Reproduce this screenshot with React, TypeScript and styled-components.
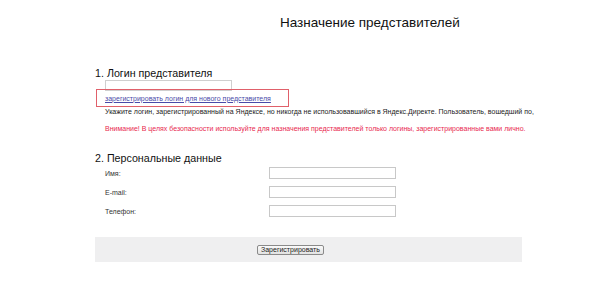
import React from "react";
import styled, { createGlobalStyle } from "styled-components";

const Global = createGlobalStyle`
  html, body { margin: 0; padding: 0; background: #fff; }
  body { font-family: "Liberation Sans", Arial, sans-serif; color: #000; }
`;

const Page = styled.div`
  width: 596px;
  height: 290px;
  overflow: hidden;
  padding-top: 14px;
  box-sizing: border-box;
`;

const Title = styled.h1`
  margin: 0 0 0 280px;
  font-size: 13.5px;
  line-height: 17px;
  font-weight: normal;
  color: #111;
`;

const SectionHeading = styled.h2<{ $top: number }>`
  margin: ${(p) => p.$top}px 0 0 95px;
  font-size: 10.7px;
  line-height: 13px;
  font-weight: normal;
  color: #111;
`;

const Block = styled.div`
  margin-left: 105px;
`;

const LoginInput = styled.input`
  display: block;
  box-sizing: border-box;
  width: 127px;
  height: 11px;
  margin: 0;
  padding: 0;
  border: 1px solid #cfcfcf;
  background: #fff;
`;

const Highlight = styled.div`
  margin: -2px 0 0 -9px;
  width: 193px;
  height: 18px;
  box-sizing: border-box;
  border: 1px solid #e0606a;
  padding-left: 8px;
  display: flex;
  align-items: center;
`;

const RegLink = styled.a`
  font-size: 7px;
  color: #4a4aa8;
  text-decoration: underline;
  white-space: nowrap;
`;

const Note = styled.p<{ $warn?: boolean; $top: number }>`
  margin: ${(p) => p.$top}px 0 0;
  font-size: 7px;
  line-height: 10px;
  white-space: nowrap;
  color: ${(p) => (p.$warn ? "#e8294f" : "#222")};
`;

const Fields = styled.div`
  margin: 2px 0 0 105px;
  display: grid;
  grid-template-columns: 164px 127px;
  row-gap: 7px;
  align-items: center;
`;

const Label = styled.label`
  font-size: 7px;
  color: #333;
`;

const FieldInput = styled.input`
  box-sizing: border-box;
  width: 127px;
  height: 12px;
  margin: 0;
  padding: 0;
  border: 1px solid #c8c8c8;
  background: #fff;
`;

const Footer = styled.div`
  margin: 20px 0 0 95px;
  width: 427px;
  height: 25px;
  background: #efeff0;
  display: flex;
  align-items: center;
  padding-left: 162px;
  box-sizing: border-box;
`;

const SubmitButton = styled.button`
  height: 10px;
  padding: 0 3px;
  font-family: "Liberation Sans", Arial, sans-serif;
  font-size: 7px;
  line-height: 8px;
  color: #222;
  border: 1px solid #8a8a8a;
  border-radius: 2px;
  background: linear-gradient(#fafafa, #e2e2e2);
`;

export default function App() {
  return (
    <>
      <Global />
      <Page>
        <Title>Назначение представителей</Title>
        <SectionHeading $top={36}>1. Логин представителя</SectionHeading>
        <Block>
          <LoginInput type="text" />
          <Highlight>
            <RegLink href="#">зарегистрировать логин для нового представителя</RegLink>
          </Highlight>
        </Block>
        <Block>
          <Note $top={0}>
            Укажите логин, зарегистрированный на Яндексе, но никогда не использовавшийся в Яндекс.Директе. Пользователь, вошедший по,
          </Note>
          <Note $top={7} $warn>
            Внимание! В целях безопасности используйте для назначения представителей только логины, зарегистрированные вами лично.
          </Note>
        </Block>
        <SectionHeading $top={18}>2. Персональные данные</SectionHeading>
        <Fields>
          <Label>Имя:</Label>
          <FieldInput type="text" />
          <Label>E-mail:</Label>
          <FieldInput type="text" />
          <Label>Телефон:</Label>
          <FieldInput type="text" />
        </Fields>
        <Footer>
          <SubmitButton>Зарегистрировать</SubmitButton>
        </Footer>
      </Page>
    </>
  );
}
